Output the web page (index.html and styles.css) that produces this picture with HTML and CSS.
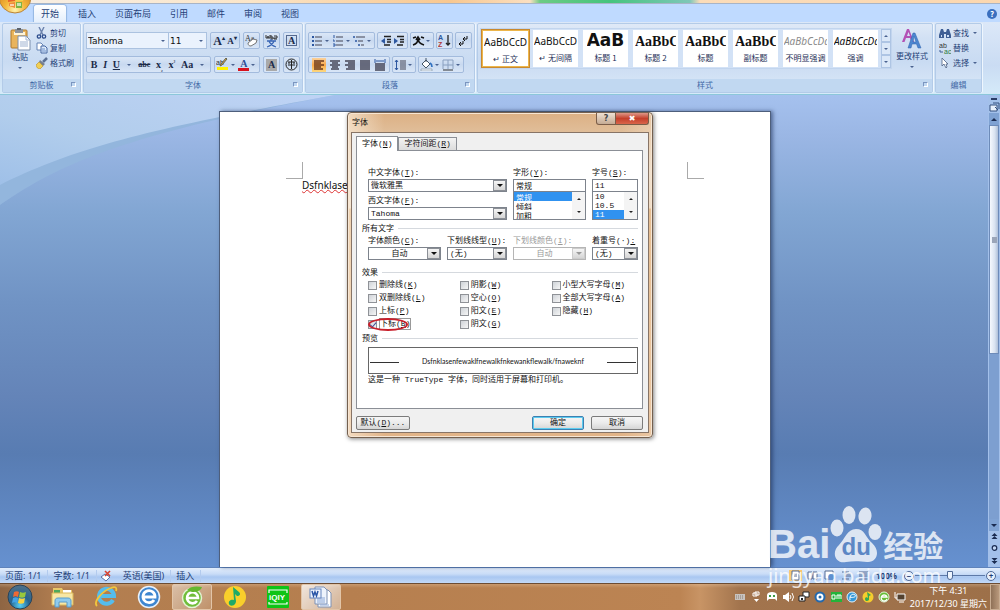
FILE: index.html
```html
<!DOCTYPE html>
<html lang="zh-CN">
<head>
    <meta charset="UTF-8">
    <meta name="viewport" content="width=device-width, initial-scale=1.0">
    <title>字体</title>
    <link rel="stylesheet" href="styles.css">
</head>
<body>
    <header class="topbar">
        <div class="glass"></div>
        <button class="office-button" aria-label="Office">
            <svg viewBox="0 0 34 34"><defs><radialGradient id="orb" cx="50%" cy="90%" r="90%"><stop offset="0" stop-color="#fff3b0"/><stop offset=".35" stop-color="#f5b73b"/><stop offset="1" stop-color="#c96f12"/></radialGradient></defs><circle cx="17" cy="17" r="16" fill="url(#orb)" stroke="#b9843a"/><path d="M10 16l7-2v7l-7 1z" fill="#e8642a"/><path d="M18 14h7v7h-7z" fill="#f3d24a"/><path d="M11 23l6-1v6l-6-2z" fill="#f08a3c"/><path d="M18 22h6v6h-6z" fill="#7fb344"/><path d="M12 24h4v2h-4M19 23h4v3h-4" fill="#fff" opacity=".6"/></svg>
        </button>
        <nav class="tabs">
            <button class="tab active">开始</button>
            <button class="tab">插入</button>
            <button class="tab">页面布局</button>
            <button class="tab">引用</button>
            <button class="tab">邮件</button>
            <button class="tab">审阅</button>
            <button class="tab">视图</button>
            <button class="help" aria-label="帮助">?</button>
        </nav>
    </header>

    <section class="ribbon">
        <!-- 剪贴板 -->
        <div class="group clipboard">
            <div class="group-body">
                <button class="big">
                    <svg width="22" height="23" viewBox="0 0 22 23"><rect x="2" y="2" width="16" height="18" rx="1" fill="#e9b45c" stroke="#b07a2c"/><rect x="5" y="4" width="11" height="3" fill="#fff4d8"/><path d="M6 1h8v4H6z" fill="#8e949c"/><path d="M8 0h4v2H8z" fill="#5c636d"/><path d="M9 8h8l4 4v10H9z" fill="#fff" stroke="#7d90ad"/><path d="M17 8v4h4M11 14h8M11 16h8M11 18h8" fill="none" stroke="#9fb3d1"/></svg>
                    <span>粘贴</span>
                    <i class="caret"></i>
                </button>
                <div class="stack">
                    <button class="item"><svg width="12" height="12" viewBox="0 0 12 12"><path d="M3 0l4 8M8 0L4 8" stroke="#6b82ad" stroke-width="1.4" fill="none"/><circle cx="3" cy="9.500" r="1.700" fill="none" stroke="#2f4f8f" stroke-width="1.300"/><circle cx="8" cy="9.500" r="1.700" fill="none" stroke="#2f4f8f" stroke-width="1.300"/></svg>剪切</button>
                    <button class="item"><svg width="12" height="12" viewBox="0 0 12 12"><path d="M1 1h4l2 2v5H1z" fill="#fff" stroke="#6483b5"/><path d="M5 4h4l2 2v5H5z" fill="#dce9fb" stroke="#4668a3"/><path d="M6 7h3M6 9h4" stroke="#6c91c9"/></svg>复制</button>
                    <button class="item"><svg width="12" height="12" viewBox="0 0 12 12"><path d="M11 1L7 5" stroke="#5a6f94" stroke-width="2.500"/><path d="M4 3l5 4-2 2-4-4z" fill="#777f8f"/><path d="M3 5l4 4-3 3c-2 0-4-2-4-4z" fill="#f1cf55" stroke="#b58c22" stroke-width=".6"/></svg>格式刷</button>
                </div>
            </div>
            <footer>剪贴板<i class="launcher"></i></footer>
        </div>

        <!-- 字体 -->
        <div class="group font">
            <div class="group-body rows">
                <div class="row">
                    <div class="combos">
                        <span class="ribbon-select name"><select aria-label="字体"><option>Tahoma</option></select><i class="caret"></i></span>
                        <span class="ribbon-select size"><select aria-label="字号"><option>11</option></select><i class="caret"></i></span>
                    </div>
                    <div class="box grow2">
                        <button class="serif">A<sup>▴</sup></button><button class="serif small">A<sup>▾</sup></button>
                    </div>
                    <div class="box"><button aria-label="清除格式"><svg width="13" height="13" viewBox="0 0 13 13"><text x="0" y="7" font-size="8" font-family="Liberation Serif" fill="#333">Aa</text><path d="M3 9l5-4 4 1-1 3-5 3c-2 0-3-1-3-3z" fill="#fff" stroke="#777"/></svg></button></div>
                    <div class="box"><button aria-label="拼音指南"><svg width="13" height="14" viewBox="0 0 13 14"><path d="M1 1v3h2V2v2h2V1M6 1v4M6 3h2v2H6M9 2h3v2H9v1h3" fill="none" stroke="#333"/><path d="M2 7h9M6 5v2M4 7c1 3 4 5 7 6M9 7c-1 3-4 5-7 6" fill="none" stroke="#3a66b5" stroke-width="1.300"/></svg></button></div>
                    <div class="box"><button class="serif framed">A</button></div>
                </div>
                <div class="row">
                    <div class="box format">
                        <button class="serif"><b>B</b></button><button class="serif"><em>I</em></button><button class="serif"><u>U</u></button><i class="caret"></i><button class="serif tiny"><s>abc</s></button><button class="serif">x<sub>₂</sub></button><button class="serif">x<sup>²</sup></button><button class="serif">Aa</button><i class="caret"></i>
                    </div>
                    <div class="box colors">
                        <button aria-label="突出显示"><svg width="13" height="13" viewBox="0 0 13 13"><rect y="9" x="1" width="11" height="3" fill="#fff200"/><text x="0" y="7" font-size="7" font-family="Liberation Sans" fill="#333">ab</text><path d="M11 1L6 7l-2 1 1-2 5-6z" fill="#d9a441" stroke="#665"/></svg></button><i class="caret"></i>
                        <button class="serif" aria-label="字体颜色"><span class="red-bar">A</span></button><i class="caret"></i>
                    </div>
                    <div class="box"><button class="serif shaded">A</button></div>
                    <div class="box"><button aria-label="带圈字符"><svg width="13" height="13" viewBox="0 0 13 13"><circle cx="6.500" cy="6.500" r="5.500" fill="none" stroke="#222"/><path d="M3 4h7M6.500 2v9M3 7h7M4 4v2M9 4v2" fill="none" stroke="#222"/></svg></button></div>
                </div>
            </div>
            <footer>字体<i class="launcher"></i></footer>
        </div>

        <!-- 段落 -->
        <div class="group paragraph">
            <div class="group-body rows">
                <div class="row">
                    <div class="box lists">
                        <button aria-label="项目符号"><svg width="12" height="12" viewBox="0 0 12 12"><path d="M1 1h2v2H1zM1 5h2v2H1zM1 9h2v2H1z" fill="#2d57a0"/><path d="M4 2h7M4 6h7M4 10h7" stroke="#445"/></svg></button><i class="caret"></i>
                        <button aria-label="编号"><svg width="12" height="12" viewBox="0 0 12 12"><path d="M2 0v3M1 5h1v2M1 9h2v2H1" stroke="#2d57a0" fill="none"/><path d="M4 2h7M4 6h7M4 10h7" stroke="#445"/></svg></button><i class="caret"></i>
                        <button aria-label="多级列表"><svg width="12" height="12" viewBox="0 0 12 12"><path d="M1 1v2M3 5v2M6 9v2" stroke="#2d57a0" stroke-width="1.500"/><path d="M3 2h9M5 6h5M8 10h3" stroke="#445"/></svg></button><i class="caret"></i>
                    </div>
                    <div class="box indents">
                        <button aria-label="减少缩进"><svg width="12" height="12" viewBox="0 0 12 12"><path d="M4 1.500h7M7 4.500h4M7 7h4M4 10h6" stroke="#222" stroke-width="1.300"/><path d="M5 3v6L1 6z" fill="#2d57a0"/></svg></button>
                        <button aria-label="增加缩进"><svg width="12" height="12" viewBox="0 0 12 12"><path d="M4 1.500h7M7 4.500h4M7 7h4M4 10h6" stroke="#222" stroke-width="1.300"/><path d="M1 3v6l4-3z" fill="#2d57a0"/></svg></button>
                    </div>
                    <div class="box"><button aria-label="中文版式"><svg width="13" height="12" viewBox="0 0 13 12"><path d="M1 10c3-1 5-3 5-6M6 4c0 3 3 5 6 6M1 3l3-1M9 2l3 1M4 5l2-3 2 3" fill="none" stroke="#111" stroke-width="1.600"/></svg></button><i class="caret"></i></div>
                    <div class="box"><button aria-label="排序"><svg width="13" height="13" viewBox="0 0 13 13"><text x="0" y="6" font-size="7" font-weight="bold" font-family="Liberation Sans" fill="#2d57a0">A</text><text x="0" y="13" font-size="7" font-weight="bold" font-family="Liberation Sans" fill="#b03a3a">Z</text><path d="M10 1v10M8 9l2 2 2-2" fill="none" stroke="#222" stroke-width="1.300"/></svg></button></div>
                    <div class="box"><button aria-label="编辑标记"><svg width="13" height="12" viewBox="0 0 13 12"><path d="M10 1v3H7M8 2L6 4l2 2M6 6v3H3M4 7L2 9l2 2" fill="none" stroke="#111"/></svg></button></div>
                </div>
                <div class="row">
                    <div class="box aligns">
                        <button class="on" aria-label="左对齐"><svg width="12" height="12" viewBox="0 0 12 12"><path d="M1 2h10M1 4h7M1 6h10M1 8h7M1 10h9" stroke="#6b3a1e" stroke-width="1.500"/></svg></button>
                        <button aria-label="居中"><svg width="12" height="12" viewBox="0 0 12 12"><path d="M1 2h10M3 4h6M1 6h10M3 8h6M2 10h8" stroke="#445" stroke-width="1.500"/></svg></button>
                        <button aria-label="右对齐"><svg width="12" height="12" viewBox="0 0 12 12"><path d="M1 2h10M4 4h7M1 6h10M4 8h7M2 10h9" stroke="#445" stroke-width="1.500"/></svg></button>
                        <button aria-label="两端对齐"><svg width="12" height="12" viewBox="0 0 12 12"><path d="M1 2h10M1 4h10M1 6h10M1 8h10M1 10h10" stroke="#445" stroke-width="1.500"/></svg></button>
                        <button aria-label="分散对齐"><svg width="12" height="12" viewBox="0 0 12 12"><path d="M1 5h10M1 7h10M1 9h10M1 11h10" stroke="#445" stroke-width="1.500"/><path d="M1 0v4M11 0v4M2 2h8" stroke="#2d57a0"/></svg></button>
                    </div>
                    <div class="box"><button aria-label="行距"><svg width="13" height="12" viewBox="0 0 13 12"><path d="M2.500 1v10M1 3l1.500-2L4 3M1 9l1.500 2L4 9" stroke="#2d57a0" fill="none"/><path d="M6 2h6M6 4h6M6 6h6M6 8h6M6 10h6" stroke="#445"/></svg></button><i class="caret"></i></div>
                    <div class="box fills">
                        <button aria-label="底纹"><svg width="13" height="13" viewBox="0 0 13 13"><path d="M2 6l4-4 4 4-4 4z" fill="#fff" stroke="#456"/><path d="M6 0v4" stroke="#456"/><path d="M10 5c2 1 2 3 2 4" stroke="#2d6fc0" stroke-width="1.600" fill="none"/><path d="M1 11h11v2H1z" fill="#fff" stroke="#9ab"/></svg></button><i class="caret"></i>
                        <button aria-label="框线"><svg width="12" height="12" viewBox="0 0 12 12"><path d="M1 1h10v9M1 1v9M6 1v9M1 6h10" fill="none" stroke="#8aa0c0"/><path d="M1 11h10" stroke="#333"/></svg></button><i class="caret"></i>
                    </div>
                </div>
            </div>
            <footer>段落<i class="launcher"></i></footer>
        </div>

        <!-- 样式 -->
        <div class="group styles">
            <div class="group-body">
                <div class="gallery">
                    <button class="style selected"><span class="sample">AaBbCcD</span><span>↵ 正文</span></button>
                    <button class="style"><span class="sample">AaBbCcD</span><span>↵ 无间隔</span></button>
                    <button class="style"><span class="sample h1">AaB</span><span>标题 1</span></button>
                    <button class="style"><span class="sample h2">AaBbC</span><span>标题 2</span></button>
                    <button class="style"><span class="sample h2">AaBbC</span><span>标题</span></button>
                    <button class="style"><span class="sample h2">AaBbC</span><span>副标题</span></button>
                    <button class="style"><span class="sample subtle">AaBbCcDd</span><span>不明显强调</span></button>
                    <button class="style"><span class="sample italic">AaBbCcDd</span><span>强调</span></button>
                    <div class="gallery-nav">
                        <button aria-label="上一行"><i class="caret up"></i></button>
                        <button aria-label="下一行"><i class="caret"></i></button>
                        <button aria-label="其他"><i class="caret more"></i></button>
                    </div>
                </div>
                <button class="big change">
                    <svg width="22" height="22" viewBox="0 0 22 22"><path d="M1 14L6 1h2l5 13h-2.500L9 10H5l-1.500 4zM6 8h3L7.500 4z" fill="#b352b5"/><path d="M7 20l5-15h2l6 15h-3l-1.500-4H11l-1 4zM12 14h3l-2-6z" fill="#4d86d0" stroke="#2c62ad" stroke-width=".5"/></svg>
                    <span>更改样式</span>
                    <i class="caret"></i>
                </button>
            </div>
            <footer>样式<i class="launcher"></i></footer>
        </div>

        <!-- 编辑 -->
        <div class="group edit">
            <div class="group-body">
                <div class="stack">
                    <button class="item"><svg width="12" height="12" viewBox="0 0 12 12"><path d="M2 2h2l1 3h2l1-3h2l2 6v3H7V7H5v4H0V8z" fill="#3f5f95"/><path d="M2 8h1v2H2zM8 8h2v2H8z" fill="#cfe0f7"/></svg>查找<i class="caret"></i></button>
                    <button class="item"><svg width="12" height="12" viewBox="0 0 12 12"><text x="0" y="6" font-size="7" font-family="Liberation Sans" fill="#333">ab</text><text x="5" y="12" font-size="7" font-family="Liberation Sans" fill="#2b7a3b">ac</text><path d="M1 8v2h3" stroke="#3f5f95" fill="none"/></svg>替换</button>
                    <button class="item"><svg width="12" height="12" viewBox="0 0 12 12"><path d="M3 1v8l2-2 2 4 1-1-1-3h2z" fill="#fff" stroke="#4d6184" stroke-width=".8"/></svg>选择<i class="caret"></i></button>
                </div>
            </div>
            <footer>编辑</footer>
        </div>
    </section>

    <main class="workspace">
        <svg class="swoosh" viewBox="0 0 340 115" preserveAspectRatio="none">
            <defs><linearGradient id="sw" x1="1" y1="0" x2="0" y2="1"><stop offset="0" stop-color="#bfd3f5"/><stop offset=".6" stop-color="#b1cdec"/><stop offset="1" stop-color="#9fc0e8"/></linearGradient></defs>
            <path d="M0 0V110C60 68 130 38 335 0z" fill="#93b6dd"/>
            <path d="M0 0V90C80 50 160 32 335 0z" fill="url(#sw)"/>
        </svg>
        <div class="canvas">
            <article class="page">
                <div class="crops"><i></i><i class="right"></i></div>
                <p class="doc-text">Dsfnklasenfewaklfnewalkfnkewankflewalk/fnaweknf</p>
            </article>
        </div>
        <div class="scrollbar">
            <i class="split"></i>
            <svg width="11" height="11" viewBox="0 0 11 11"><path d="M1 3h7v6H1z" fill="#e8f0fc" stroke="#35507f"/><path d="M4 1h6v6M6 5l3 3" fill="none" stroke="#35507f"/></svg>
            <button class="arrow" aria-label="向上"><i class="caret up"></i></button>
            <div class="thumb"></div>
            <div class="track"></div>
            <button class="arrow" aria-label="向下"><i class="caret"></i></button>
            <svg width="9" height="36" viewBox="0 0 9 36"><g fill="#1b2c52"><path d="M4.500 2l3 3h-6zM4.500 5l3 3h-6zM1.500 27h6l-3 3zM1.500 30h6l-3 3z"/></g><circle cx="4.500" cy="17" r="2.300" fill="#c3d7f5" stroke="#1b2c52" stroke-width="1.200"/></svg>
        </div>

        <!-- 字体对话框 -->
        <div class="dialog" role="dialog" aria-labelledby="dlg-title">
            <div class="titlebar">
                <span id="dlg-title">字体</span>
                <div class="win-buttons">
                    <button aria-label="帮助">?</button><button class="close" aria-label="关闭">✖</button>
                </div>
            </div>
            <form class="client">
                <div class="dlg-tabs">
                    <button type="button" class="dlg-tab active">字体(<u>N</u>)</button><button type="button" class="dlg-tab">字符间距(<u>R</u>)</button>
                </div>
                <div class="panel">
                    <div class="faces">
                        <div class="col">
                            <label for="cn-font">中文字体(<u>T</u>):</label>
                            <span class="combo"><select id="cn-font"><option>微软雅黑</option></select></span>
                            <label for="en-font" class="next">西文字体(<u>F</u>):</label>
                            <span class="combo"><select id="en-font"><option>Tahoma</option></select></span>
                        </div>
                        <div class="col">
                            <label for="style">字形(<u>Y</u>):</label>
                            <input id="style" type="text" value="常规">
                            <div class="listbox">
                                <select size="3" aria-label="字形"><option selected>常规</option><option>倾斜</option><option>加粗</option></select>
                                <span class="list-scroll"><i class="caret up"></i><i class="caret"></i></span>
                            </div>
                        </div>
                        <div class="col">
                            <label for="size">字号(<u>S</u>):</label>
                            <input id="size" type="text" value="11">
                            <div class="listbox">
                                <select size="3" aria-label="字号"><option>10</option><option>10.5</option><option selected>11</option></select>
                                <span class="list-scroll"><i class="caret up"></i><i class="caret"></i></span>
                            </div>
                        </div>
                    </div>

                    <h3>所有文字</h3>
                    <div class="all-text">
                        <div class="col"><label for="color">字体颜色(<u>C</u>):</label><span class="combo centered"><select id="color"><option>自动</option></select></span></div>
                        <div class="col"><label for="uline">下划线线型(<u>U</u>):</label><span class="combo"><select id="uline"><option>(无)</option></select></span></div>
                        <div class="col off"><label for="ucolor">下划线颜色(<u>I</u>):</label><span class="combo centered"><select id="ucolor" disabled><option>自动</option></select></span></div>
                        <div class="col"><label for="mark">着重号(·)<u>:</u></label><span class="combo"><select id="mark"><option>(无)</option></select></span></div>
                    </div>

                    <h3>效果</h3>
                    <div class="effects">
                        <label><input type="checkbox">删除线(<u>K</u>)</label>
                        <label><input type="checkbox">双删除线(<u>L</u>)</label>
                        <label><input type="checkbox">上标(<u>P</u>)</label>
                        <label class="marked"><input type="checkbox" checked><span class="focus">下标(<u>B</u>)</span><i class="ellipse"></i></label>
                        <label><input type="checkbox">阴影(<u>W</u>)</label>
                        <label><input type="checkbox">空心(<u>O</u>)</label>
                        <label><input type="checkbox">阳文(<u>E</u>)</label>
                        <label><input type="checkbox">阴文(<u>G</u>)</label>
                        <label><input type="checkbox">小型大写字母(<u>M</u>)</label>
                        <label><input type="checkbox">全部大写字母(<u>A</u>)</label>
                        <label><input type="checkbox">隐藏(<u>H</u>)</label>
                    </div>

                    <h3>预览</h3>
                    <div class="preview"><i></i><span>Dsfnklasenfewaklfnewalkfnkewankflewalk/fnaweknf</span><i></i></div>
                    <p class="note">这是一种 TrueType 字体，同时适用于屏幕和打印机。</p>
                </div>
                <div class="actions">
                    <button type="button" class="left">默认(<u>D</u>)...</button>
                    <button type="button" class="primary">确定</button>
                    <button type="button">取消</button>
                </div>
            </form>
        </div>
    </main>

    <div class="statusbar">
        <span>页面: 1/1</span><span>字数: 1/1</span>
        <span class="proof"><svg width="12" height="12" viewBox="0 0 12 12"><path d="M1 7l4-3 5 3-4 4z" fill="#fff" stroke="#5a74a5"/><path d="M5 1l5 5M10 1L5 6" stroke="#d8402c" stroke-width="1.600"/></svg></span>
        <span>英语(美国)</span><span>插入</span>
        <div class="views">
            <button class="on" aria-label="页面视图"><svg width="11" height="11" viewBox="0 0 11 11"><path d="M2 1h7v9H2zM4 4h3M4 6h3" fill="#fff" stroke="#54688f"/></svg></button>
            <button aria-label="阅读版式"><svg width="11" height="11" viewBox="0 0 11 11"><path d="M1 2h4v7H1zM6 2h4v7H6z" fill="#fff" stroke="#54688f"/></svg></button>
            <button aria-label="Web版式"><svg width="11" height="11" viewBox="0 0 11 11"><path d="M1 1h8v8H1z" fill="#fff" stroke="#54688f"/><circle cx="7" cy="7" r="3" fill="#5d8fd0"/></svg></button>
            <button aria-label="大纲视图"><svg width="11" height="11" viewBox="0 0 11 11"><path d="M1 2h7M3 4h7M3 6h7M1 9h7" stroke="#54688f"/></svg></button>
            <button aria-label="普通视图"><svg width="11" height="11" viewBox="0 0 11 11"><path d="M1 2h9M1 4h9M1 6h9M1 9h9" stroke="#54688f"/></svg></button>
        </div>
        <b class="percent">100%</b>
        <button class="round" aria-label="缩小">−</button>
        <input class="zoom" type="range" min="0" max="100" value="50" aria-label="显示比例">
        <button class="round" aria-label="放大">+</button>
    </div>

    <footer class="taskbar">
        <button class="start" aria-label="开始菜单"><svg width="26" height="26" viewBox="0 0 26 26"><defs><radialGradient id="st" cx="50%" cy="85%" r="80%"><stop offset="0" stop-color="#57d1f5"/><stop offset=".5" stop-color="#27648f"/><stop offset="1" stop-color="#4d7089"/></radialGradient></defs><circle cx="13" cy="13" r="12" fill="url(#st)" stroke="#2b4357"/><path d="M7 8c2-1 4-1 5 0l-1 5c-2-1-3-1-5 0z" fill="#ee6a35"/><path d="M13 8c2 1 4 1 6 0l-1 5c-2 1-4 1-6 0z" fill="#98c83c"/><path d="M6 14c2-1 3-1 5 0l-1 5c-2-1-3-1-5 0z" fill="#43a3e6"/><path d="M12 14c2 1 4 1 6 0l-1 5c-2 1-4 1-6 0z" fill="#fbd33f"/></svg></button>
        <button aria-label="资源管理器"><svg width="24" height="22" viewBox="0 0 24 22"><path d="M2 2h9l1 2h9v15H2z" fill="#e9c869"/><path d="M3 4h6v3H3z" fill="#4fa95b"/><path d="M12 4h8v3h-8z" fill="#fff"/><path d="M1 7h21v12H1z" fill="#f8e7a4" stroke="#dcb95a"/><path d="M4 21v-6c0-2 1-3 3-3h10c2 0 3 1 3 3v6h-4v-5H8v5z" fill="#8fcbed" stroke="#5a9cc9"/></svg></button>
        <button aria-label="Internet Explorer"><svg width="24" height="24" viewBox="0 0 24 24"><path d="M19 15a7.500 7.500 0 1 1 1-4H6" fill="none" stroke="#55bdec" stroke-width="4"/><path d="M3 21C-1 17 8 6 17 3c5-2 6 0 5 3" fill="none" stroke="#f2c53c" stroke-width="1.800"/></svg></button>
        <button aria-label="浏览器"><svg width="24" height="24" viewBox="0 0 24 24"><circle cx="12" cy="12" r="10.500" fill="#3e86d0" stroke="#e9f1fa" stroke-width="1.500"/><path d="M17 15a6 6 0 1 1 1-3H7" fill="none" stroke="#fff" stroke-width="2.800"/></svg></button>
        <button class="open" aria-label="360浏览器"><svg width="24" height="24" viewBox="0 0 24 24"><circle cx="12" cy="13" r="9.500" fill="#70bd3a" stroke="#e2f3d3" stroke-width="1.500"/><path d="M17 16a5.500 5.500 0 1 1 1-3H7" fill="none" stroke="#fff" stroke-width="2.600"/><path d="M7 5c3-4 10-4 15-3-1 4-6 5-10 5" fill="#65b82e"/></svg></button>
        <button aria-label="QQ音乐"><svg width="24" height="24" viewBox="0 0 24 24"><circle cx="12" cy="12" r="11" fill="#f9cf2b"/><path d="M10 2l6 5c2 2 1 4-2 4l-2-2 1 7c0 5-6 6-7 3s2-5 5-4z" fill="#1eaa67"/></svg></button>
        <button aria-label="爱奇艺"><svg width="24" height="24" viewBox="0 0 24 24"><rect x="1" y="1" width="22" height="22" rx="1" fill="#0fc416"/><path d="M3 8V5h18v3M3 17v2h18v-2" fill="none" stroke="#fff" stroke-width="1.200"/><text x="3" y="15" font-size="8" font-weight="bold" font-family="Liberation Sans" fill="#fff">iQIY</text></svg></button>
        <button class="open word" aria-label="Word"><svg width="24" height="24" viewBox="0 0 24 24"><path d="M9 5h10l3 3v14H9z" fill="#fff" stroke="#7d91b5"/><path d="M6 2h9l3 3v14H6z" fill="#edf3fc" stroke="#7d91b5"/><path d="M8 13h8M8 15h8M8 17h8M11 20h9" stroke="#8ba7d6"/><rect x="1" y="4" width="11" height="9" fill="#edf2fb" stroke="#6384bd"/><path d="M3 6l1.500 5L6 7l1.500 4L9 6" fill="none" stroke="#2b57a7" stroke-width="1.500"/></svg></button>

        <div class="tray">
            <svg viewBox="0 0 12 12"><path d="M1 3h10v6H1z" fill="#c7c3bf"/><path d="M2 5h8M2 7h8" stroke="#8b7c70" stroke-dasharray="1 1"/></svg>
            <svg viewBox="0 0 12 12"><path d="M5 1h4v3H5zM3 2h4v3H3z" fill="none" stroke="#fff"/><path d="M4 8h5l-2.500 3z" fill="#fff"/></svg>
            <svg viewBox="0 0 12 12"><path d="M1 10V4c0-4 10-4 10 0v6l-2-2H3z" fill="#fff"/><path d="M3 4h2v2H3zM7 4h2v2H7z" fill="#3c9c46"/></svg>
            <svg viewBox="0 0 12 12"><path d="M1 4h2l4-3v10L3 8H1z" fill="#fff"/><path d="M8 4q2 2 0 4M10 2q3 4 0 8" fill="none" stroke="#fff"/></svg>
            <svg viewBox="0 0 12 12"><path d="M5 1h6v5H5z" fill="#fff" stroke="#222"/><path d="M1 5h6v5H1z" fill="#fff" stroke="#222"/><path d="M3 7h2v2H3z" fill="#222"/></svg>
            <svg viewBox="0 0 12 12"><circle cx="6" cy="6" r="5.500" fill="#2469ad"/><circle cx="6" cy="6" r="2.500" fill="#2469ad" stroke="#fff" stroke-width="2"/></svg>
            <svg viewBox="0 0 12 12"><path d="M1 1h11v10H1z" fill="#24b33a"/><path d="M2 4h3v4H2zM7 8V4h4v4M9 4v4" fill="none" stroke="#fff"/></svg>
            <svg viewBox="0 0 12 12"><circle cx="6" cy="6" r="5" fill="#3498d8" stroke="#e5f3fc"/><path d="M4 9c-1-5 3-7 5-5s-3 3-5 2" stroke="#fff" fill="none"/></svg>
            <svg viewBox="0 0 12 12"><circle cx="6" cy="6" r="5.500" fill="#f5cd2d"/><path d="M5 1l4 3-2 1v4c-2 2-4 1-4-1s2-2 3-1z" fill="#35a852"/></svg>
            <svg viewBox="0 0 12 12"><circle cx="6" cy="6" r="5" fill="#69bd38" stroke="#e2f5d8"/><path d="M9 8a3 3 0 1 1 0-2H4" fill="none" stroke="#fff" stroke-width="1.300"/></svg>
            <svg viewBox="0 0 12 12"><path d="M3 3h8v6H3z" fill="#53412f" stroke="#fff"/><path d="M1 1v6h2M5 11h5" fill="none" stroke="#fff"/></svg>
        </div>
        <div class="clock"><span>下午 4:31</span><span>2017/12/30 星期六</span></div>
        <button class="desktop" aria-label="显示桌面"></button>
    </footer>

    <div class="watermark">
        <div class="wm-logo">
            <span class="bai">Bai</span>
            <span class="paw">
                <svg width="52" height="57" viewBox="0 0 52 57"><g fill="#fff"><ellipse cx="7" cy="22" rx="6.500" ry="8.500"/><ellipse cx="19" cy="9" rx="6.500" ry="9"/><ellipse cx="35" cy="10" rx="6.500" ry="8.500" transform="rotate(8 35 10)"/><ellipse cx="45" cy="26" rx="6.500" ry="8"/><path d="M26 23c9 0 9 8 16 14 9 8 5 20-5 19-8-1-14-1-21 0C5 58 1 46 9 39c6-6 8-16 17-16z"/></g></svg>
                <em>du</em>
            </span>
            <span class="jy">经验</span>
        </div>
        <div class="wm-url">jingyan.baidu.com</div>
    </div>
</body>
</html>
```

FILE: styles.css
```css
* {
    box-sizing: border-box;
}

body {
    margin: 0;
    height: 100vh;
    display: flex;
    flex-direction: column;
    overflow: hidden;
    position: relative;
    font-family: "Noto Sans", "Noto Sans CJK SC", sans-serif;
    font-size: 8px;
    line-height: 12px;
    color: #1f3f77;
}

button,
select,
input {
    font: inherit;
    color: inherit;
    margin: 0;
    padding: 0;
    border: none;
    background: none;
    border-radius: 0;
    min-width: 0;
}

select {
    appearance: none;
    outline: none;
}

i {
    font-style: normal;
}

svg {
    display: block;
    flex: none;
}

.caret {
    flex: none;
    width: 0;
    height: 0;
    border: 2px solid transparent;
    border-top-color: #4a6290;
    border-bottom: none;
}

.caret.up {
    border-top: none;
    border-bottom: 2px solid #4a6290;
}

/* 顶部 */
.topbar {
    flex: none;
    position: relative;
    background: #bfdaff;
}

.glass {
    height: 4px;
    background: linear-gradient(90deg, #f6efe6 0, #fbe5c8 25%, #f8c78f 45%, #fbdfc0 53%, #6ccb84 54%, #45c47d 61%, #7fc7b8 69%, #fbdcb9 70%, #fbd7b0 100%);
    border-bottom: 1px solid #a8b4c6;
}

.office-button {
    position: absolute;
    left: -2px;
    top: -20px;
    width: 34px;
    height: 34px;
}

.tabs {
    display: flex;
    gap: 5px;
    height: 18px;
    padding: 1px 3px 0 34px;
    font-family: "Noto Sans CJK SC", sans-serif;
    font-size: 9px;
}

.tab {
    padding: 0 7px;
    white-space: nowrap;
}

.tab.active {
    background: linear-gradient(#fff, #e4effc);
    border-radius: 3px 3px 0 0;
    box-shadow: 0 0 1px 1px #94b6e2;
}

.help {
    margin: 4px 0 0 auto;
    width: 10px;
    height: 10px;
    border-radius: 50%;
    background: #3a6fbf;
    color: #fff;
    font-size: 8px;
    font-weight: bold;
    line-height: 10px;
}

/* 功能区 */
.ribbon {
    flex: none;
    position: relative;
    display: flex;
    gap: 2px;
    height: 73px;
    padding: 1px 18px 1px 2px;
    background: linear-gradient(#dce8f8, #cadcf3 60%, #d5eaf9);
    border-bottom: 1px solid #8cc7da;
    font-family: "Noto Sans CJK SC", sans-serif;
}

.group {
    display: flex;
    flex-direction: column;
    border: 1px solid #b3cbe8;
    border-radius: 2px;
    background: linear-gradient(#dfe9f7, #d2e1f4 20%, #c9dbf2 55%, #dbe8f8);
    box-shadow: 1px 0 0 #eef6fe;
}

.clipboard {
    width: 79px;
}

.font {
    width: 220px;
}

.paragraph {
    width: 170px;
}

.styles {
    flex: 1;
    min-width: 0;
}

.edit {
    width: 47px;
}

.group-body {
    flex: 1;
    display: flex;
    min-height: 0;
}

.group footer {
    position: relative;
    height: 13px;
    background: #c1d8f1;
    color: #4268a6;
    text-align: center;
}

.launcher {
    position: absolute;
    right: 4px;
    top: 3px;
    width: 5px;
    height: 5px;
    border: 1px solid #7b95bf;
    border-right-color: #fff;
    border-bottom-color: #fff;
}

.big {
    display: flex;
    flex-direction: column;
    align-items: center;
    padding: 4px 5px 0 6px;
    white-space: nowrap;
}

.big span {
    margin: 0 0 4px;
}

.stack {
    display: flex;
    flex-direction: column;
    gap: 3px;
    padding-top: 3px;
}

.item {
    display: flex;
    align-items: center;
    gap: 2px;
    height: 12px;
    white-space: nowrap;
}

.item .caret {
    margin-left: 2px;
}

.edit .stack {
    padding-left: 3px;
}

.rows {
    flex-direction: column;
    gap: 7px;
    padding: 8px 2px 0 2px;
}

.row {
    display: flex;
    gap: 3px;
    height: 17px;
}

.combos {
    display: flex;
    width: 125px;
    background: #eaf2fd;
    border: 1px solid #abc2e0;
    color: #111;
}

.ribbon-select {
    display: flex;
    align-items: center;
    padding-right: 3px;
    font-family: "DejaVu Sans", sans-serif;
    font-size: 9px;
}

.ribbon-select select {
    flex: 1;
    height: 15px;
    padding-left: 1px;
}

.ribbon-select.name {
    flex: 1;
}

.ribbon-select.size {
    width: 38px;
    border-left: 1px solid #abc2e0;
}

.box {
    display: flex;
    align-items: center;
    justify-content: space-around;
    min-width: 17px;
    padding: 0 1px;
    border: 1px solid #a3bbdd;
    border-radius: 2px;
    background: linear-gradient(#dbe7f7, #c8d9f0 50%, #d9e6f7);
}

.box .caret {
    margin: 0 2px 0 1px;
}

.serif {
    font-family: "Liberation Serif", serif;
    font-size: 10px;
    font-weight: bold;
    color: #1c2b49;
}

.serif sup,
.serif sub {
    font-size: 6px;
    line-height: 1px;
}

.grow2 {
    width: 31px;
}

.grow2 .serif {
    font-size: 12px;
}

.grow2 .small {
    font-size: 9px;
}

.tiny {
    font-size: 8px;
}

.framed {
    width: 11px;
    height: 11px;
    line-height: 9px;
    border: 1px solid #55698f;
}

.shaded {
    width: 11px;
    height: 12px;
    background: #a9a9a9;
}

.format {
    width: 127px;
}

.colors {
    width: 47px;
}

.red-bar {
    display: block;
    width: 11px;
    height: 12px;
    line-height: 9px;
    border-bottom: 3px solid #d8121e;
    color: #2d4f96;
}

.lists {
    width: 68px;
}

.indents {
    width: 31px;
}

.aligns {
    width: 82px;
}

.fills {
    width: 46px;
}

.aligns .on {
    padding: 1px;
    background: linear-gradient(#fbd19b, #f9a94c 50%, #fdd87e);
}

.paragraph .row {
    gap: 2px;
}

/* 样式库 */
.gallery {
    flex: 1;
    display: flex;
    gap: 1px;
    height: 41px;
    margin: 4px 0 0 2px;
    background: #d3e2f6;
    border: 1px solid #c2d5ee;
    color: #1b2d55;
}

.style {
    flex: 1;
    display: flex;
    flex-direction: column;
    align-items: center;
    justify-content: flex-start;
    overflow: hidden;
    margin: 1px 2px;
    background: #fff;
    white-space: nowrap;
}

.style.selected {
    margin: 0;
    border: 2px solid #edb64a;
    outline: 1px solid #c9892f;
    outline-offset: -1px;
}

.style .sample {
    height: 22px;
    max-width: 43px;
    overflow: hidden;
    font-family: "Noto Sans", sans-serif;
    font-size: 10px;
    line-height: 23px;
    color: #111;
}

.style .h1 {
    font-family: "DejaVu Sans", sans-serif;
    font-size: 17px;
    font-weight: bold;
    line-height: 21px;
}

.style .h2 {
    max-width: 41px;
    font-family: "Liberation Serif", serif;
    font-size: 14px;
    font-weight: bold;
}

.style .subtle {
    color: #8a8a8a;
    font-style: italic;
}

.style .italic {
    font-style: italic;
}

.gallery-nav {
    display: flex;
    flex-direction: column;
    width: 10px;
}

.gallery-nav button {
    flex: 1;
    display: flex;
    align-items: center;
    justify-content: center;
    border: 1px solid #aec5e4;
    background: #dbe8f8;
}

.change {
    padding: 4px 4px 0;
}

/* 文档区 */
.workspace {
    flex: 1;
    min-height: 0;
    display: flex;
    position: relative;
    background: linear-gradient(#a5c1ee, #9ab6e4 9%, #82a6d3 25%, #7093c4 44%, #6484b8 64%, #587cb2 76%, #6691d0);
}

.swoosh {
    position: absolute;
    left: 0;
    top: 0;
    width: 340px;
    height: 115px;
}

.canvas {
    flex: 1;
    display: flex;
    justify-content: center;
    padding: 16px 0 0 2px;
    position: relative;
}

.page {
    width: 552px;
    padding: 50px 66px 0;
    background: #fff;
    border: 1px solid #4e5f7c;
    border-bottom: none;
    box-shadow: 2px 0 4px rgba(30, 50, 90, 0.6);
}

.crops {
    display: flex;
    justify-content: space-between;
}

.crops i {
    width: 17px;
    height: 17px;
    border: solid #aaa;
    border-width: 0 1px 1px 0;
}

.crops .right {
    border-width: 0 0 1px 1px;
}

.doc-text {
    margin: 0 16px;
    font-size: 10px;
    line-height: 13px;
    color: #111;
    text-decoration: underline wavy #d33 1px;
    text-underline-offset: 0;
}

.scrollbar {
    position: relative;
    width: 12px;
    display: flex;
    flex-direction: column;
    align-items: center;
    background: #a3c0ea;
}

.split {
    width: 6px;
    height: 2px;
    margin: 3px 0 2px;
    background: #2a3c66;
}

.arrow {
    width: 10px;
    height: 12px;
    display: flex;
    align-items: center;
    justify-content: center;
    background: #7fa2d3;
}

.arrow .caret {
    border-width: 3px;
    border-top-color: #1b2c52;
    border-bottom-color: #1b2c52;
}

.thumb {
    flex: 58;
    width: 10px;
    background: linear-gradient(#9aa5b8, #9aa5b8) center / 5px 6px no-repeat, linear-gradient(90deg, #f5f9fe, #d9e3f1 60%, #aebfd8);
    border: 1px solid #6d8bb9;
}

.track {
    flex: 42;
    width: 10px;
    background: #7d9fd0;
}

/* 对话框 */
.dialog {
    position: absolute;
    left: calc(50% - 153px);
    top: 17px;
    width: 306px;
    padding: 0 3px 4px;
    border: 1px solid #74604f;
    border-radius: 4px;
    background: linear-gradient(90deg, rgba(255, 245, 230, 0.6), transparent 12%, transparent 90%, rgba(255, 245, 230, 0.3)), linear-gradient(#dcb084, #e0bd98 18px, #ebd8c2 60px, #ead2b8 95px, #dba76f 96px, #e2b488);
    box-shadow: inset 0 0 0 1px #f7e6d3, 1px 1px 4px rgba(0, 0, 0, 0.5);
    font-family: "Liberation Mono", "Noto Sans CJK SC", monospace;
    color: #111;
}

.dialog u {
    text-underline-offset: 1px;
}

.titlebar {
    display: flex;
    justify-content: space-between;
    height: 19px;
    line-height: 17px;
}

.titlebar > span {
    padding-left: 1px;
    font-family: "Noto Sans CJK SC", sans-serif;
}

.win-buttons {
    display: flex;
    height: 12px;
}

.win-buttons button {
    width: 20px;
    background: linear-gradient(#eee0d2, #c5ab94);
    border: 1px solid #7a5d48;
    border-top: none;
    border-radius: 0 0 0 3px;
    color: #444;
    font-family: "DejaVu Sans", sans-serif;
    font-weight: bold;
    line-height: 10px;
}

.win-buttons .close {
    width: 33px;
    border-radius: 0 0 3px 0;
    border-left: none;
    background: linear-gradient(#dd9787, #c4402b 50%, #d9654a);
    color: #fff;
}

.client {
    padding: 3px 5px 2px 4px;
    background: #f0f0f0;
    border: 1px solid #877466;
}

.dlg-tabs {
    display: flex;
    align-items: flex-end;
}

.dlg-tab {
    height: 13px;
    padding: 0 5px;
    border: 1px solid #8b8f96;
    border-bottom: none;
    background: linear-gradient(#f3f3f3, #dcdcdc);
}

.dlg-tab.active {
    position: relative;
    height: 15px;
    margin-bottom: -1px;
    padding: 0 5px 1px;
    background: #fff;
}

.panel {
    padding: 16px 4px 22px 5px;
    background: #fff;
    border: 1px solid #8b8f96;
}

.faces,
.all-text,
.effects,
.preview,
.note {
    margin: 0 0 0 6px;
}

.faces {
    display: grid;
    grid-template-columns: 139fr 73fr 46fr;
    gap: 6px;
}

.col {
    display: flex;
    flex-direction: column;
    min-width: 0;
    white-space: nowrap;
}

.col .next {
    margin-top: 3px;
}

.combo {
    display: flex;
    position: relative;
    height: 13px;
    border: 1px solid #7d838c;
    background: #fff;
}

.combo select {
    flex: 1;
    width: 100%;
    padding: 0 12px 0 2px;
    line-height: 11px;
}

.combo.centered select {
    text-align-last: center;
}

/* 下拉按钮 */
.combo::before {
    content: "";
    position: absolute;
    right: 0;
    top: 0;
    bottom: 0;
    width: 11px;
    border: 1px solid #8b8f96;
    background: linear-gradient(#f5f5f5, #d5d5d5);
    pointer-events: none;
}

.combo::after {
    content: "";
    position: absolute;
    right: 3px;
    top: 4px;
    border: 3px solid transparent;
    border-top-color: #111;
    border-bottom: none;
    pointer-events: none;
}

.off,
.off select {
    color: #999;
    opacity: 1;
}

.off .combo {
    border-color: #b5b5b5;
}

.off .combo::before {
    border-color: #ccc;
}

.off .combo::after {
    border-top-color: #999;
}

.col input {
    width: 100%;
    height: 13px;
    padding: 0 2px;
    border: 1px solid #7d838c;
}

.listbox {
    display: flex;
    height: 28px;
    border: 1px solid #7d838c;
    border-top: none;
}

.listbox select {
    flex: 1;
    height: 27px;
    overflow: hidden;
    scrollbar-width: none;
}

.listbox option {
    height: 9px;
    min-height: 0;
    padding: 0 2px;
    line-height: 8px;
    overflow: hidden;
}

.listbox option:checked {
    background: linear-gradient(#3092f0, #3092f0);
    color: #fff;
}

.list-scroll {
    width: 13px;
    display: flex;
    flex-direction: column;
    align-items: center;
    justify-content: space-between;
    padding: 6px 0;
    background: #f4f4f4;
}

.list-scroll .caret {
    border-top-color: #222;
    border-bottom-color: #222;
}

.panel h3 {
    display: flex;
    align-items: center;
    gap: 4px;
    margin: 2px 0 0;
    font-size: 8px;
    font-weight: normal;
    line-height: 13px;
}

.panel h3::after {
    content: "";
    flex: 1;
    height: 1px;
    background: #d5d9de;
}

.all-text {
    display: grid;
    grid-template-columns: 73fr 60fr 73fr 46fr;
    gap: 6px;
}

.all-text + h3 {
    margin-top: 6px;
}

.effects {
    display: grid;
    grid-template-rows: repeat(4, 12px);
    grid-auto-flow: column;
    grid-auto-columns: 34%;
    row-gap: 1px;
}

.effects label {
    display: flex;
    align-items: center;
    white-space: nowrap;
    justify-self: start;
}

.effects input {
    appearance: none;
    width: 9px;
    height: 9px;
    margin-right: 2px;
    border: 1px solid #8f9297;
    background: linear-gradient(135deg, #cfd3d8, #f6f6f6);
}

.effects input:checked::after {
    content: "";
    display: block;
    width: 3px;
    height: 5px;
    margin-left: 2px;
    border: solid #3b4f9a;
    border-width: 0 1px 1px 0;
    transform: rotate(40deg);
}

.focus {
    line-height: 10px;
    border: 1px solid #999;
}

.marked {
    position: relative;
}

.ellipse {
    position: absolute;
    left: 0;
    top: 0;
    width: 40px;
    height: 13px;
    border: 2px solid #c8202c;
    border-radius: 50%;
}

.preview {
    display: flex;
    align-items: center;
    justify-content: space-between;
    height: 27px;
    margin-top: 2px;
    border: 1px solid #666;
    font-family: Lato, sans-serif;
    font-size: 7px;
    white-space: nowrap;
}

.preview i {
    width: 29px;
    height: 1px;
    margin: 3px 1px 0;
    background: #333;
}

.note {
    white-space: nowrap;
}

.actions {
    display: flex;
    gap: 7px;
    margin-top: 7px;
}

.actions button {
    width: 52px;
    height: 14px;
    border: 1px solid #7b7b7b;
    border-radius: 2px;
    background: linear-gradient(#f5f5f5, #ebebeb 50%, #d6d6d6);
}

.actions .left {
    margin-right: auto;
    width: 54px;
}

.actions .primary {
    border-color: #3c7fb1;
    box-shadow: inset 0 0 0 1px #5bcbef;
}

/* 状态栏 */
.statusbar {
    flex: none;
    display: flex;
    align-items: center;
    height: 16px;
    padding-right: 4px;
    background: linear-gradient(#e3eefc, #c9dcf7 40%, #a9c7f1 60%, #c2d9f8);
    border-top: 1px solid #5f83bb;
    white-space: nowrap;
}

.statusbar > span {
    padding: 0 6px 0 5px;
    border-right: 1px solid #b3cbee;
    font-size: 9px;
}

.statusbar .proof {
    padding: 0 6px 0 3px;
    border: none;
}

.views {
    display: flex;
    gap: 4px;
    margin: 0 6px 0 auto;
}

.views button {
    padding: 0 1px;
}

.views .on {
    background: #f8c873;
}

.percent {
    width: 28px;
}

.round {
    width: 10px;
    height: 10px;
    border: 1px solid #4e6896;
    border-radius: 50%;
    background: #e8f1fd;
    line-height: 8px;
    font-weight: bold;
}

.zoom {
    appearance: none;
    width: 70px;
    height: 11px;
    margin: 0 1px;
    background: linear-gradient(#5d79a8, #5d79a8) center / 100% 1px no-repeat;
}

.zoom::-webkit-slider-thumb {
    appearance: none;
    width: 6px;
    height: 9px;
    background: #eef5fe;
    border: 1px solid #4e6896;
    border-radius: 0 0 3px 3px;
}

/* 任务栏 */
.taskbar {
    flex: none;
    display: flex;
    align-items: center;
    gap: 3px;
    height: 27px;
    background: linear-gradient(rgba(255, 230, 200, 0.25), transparent 4px), linear-gradient(90deg, #8e6543 0, #b27e50 6%, #b67f4f 35%, #bc8453 68%, #c89465 70%, #a2744d 74%, #9d7049 100%);
    border-top: 1px solid #6c4c33;
}

.taskbar > button {
    flex: none;
    width: 40px;
    height: 26px;
    display: flex;
    align-items: center;
    justify-content: center;
}

.taskbar .open {
    border: 1px solid #e2c5a8;
    border-radius: 2px;
    background: linear-gradient(135deg, rgba(255, 255, 255, 0.5), rgba(255, 255, 255, 0.15));
}

.taskbar .word {
    background: linear-gradient(135deg, rgba(255, 255, 255, 0.8), rgba(255, 255, 255, 0.4));
}

.tray {
    display: flex;
    gap: 4px;
    margin-left: auto;
}

.tray svg {
    width: 12px;
    height: 12px;
}

.clock {
    display: flex;
    flex-direction: column;
    align-items: center;
    margin-left: 1px;
    color: #fff;
    font-size: 9px;
    line-height: 13px;
    white-space: nowrap;
}

.taskbar > .desktop {
    width: 10px;
    border: 1px solid #c9ad92;
    background: linear-gradient(90deg, #8f7157, #b9997c);
}

/* 水印 */
.watermark {
    position: absolute;
    right: 55px;
    bottom: 21px;
    width: 177px;
    color: #fff;
    opacity: 0.78;
    pointer-events: none;
}

.wm-logo {
    display: flex;
    align-items: flex-end;
    height: 57px;
    white-space: nowrap;
}

.bai {
    font: bold 40px/38px "Liberation Sans", sans-serif;
    text-shadow: 0 0 1px #8aa8d6;
}

.paw {
    position: relative;
}

.paw em {
    position: absolute;
    left: 0;
    right: 0;
    bottom: 3px;
    text-align: center;
    font: bold 24px/26px "Liberation Sans", sans-serif;
    color: #5b86c4;
}

.jy {
    margin-left: 1px;
    font: bold 30px/38px "Noto Sans CJK SC", sans-serif;
}

.wm-url {
    font-family: "Noto Sans", sans-serif;
    font-size: 20px;
    line-height: 26px;
    white-space: nowrap;
}
```
